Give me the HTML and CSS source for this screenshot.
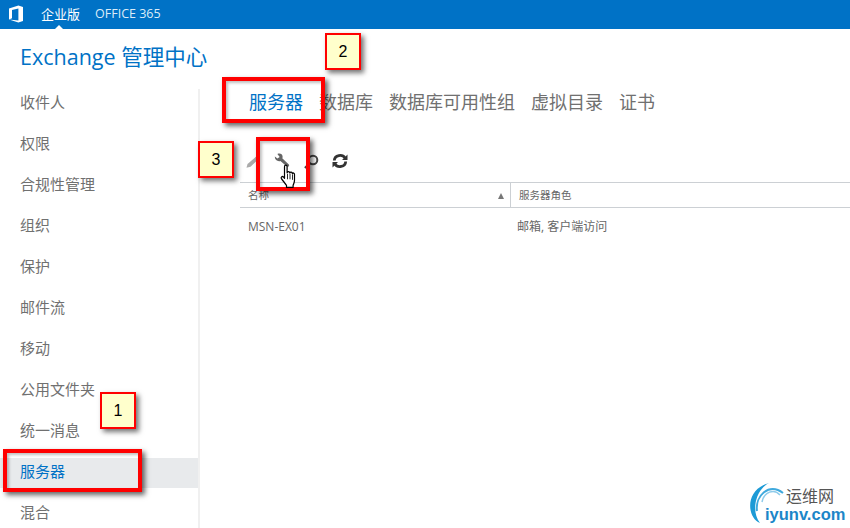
FILE: index.html
```html
<!DOCTYPE html>
<html lang="zh-CN">
<head>
<meta charset="utf-8">
<title>Exchange 管理中心</title>
<link rel="stylesheet" href="styles.css">
</head>
<body>
<header class="topbar">
  <svg class="office" viewBox="0 0 16 18" width="16" height="18"><path fill="#fff" d="M1 3.600 10.400.6 15 2v14l-4.600 1.600L1 14.400l9.400 1.200V3.600L4 5v8.200l-3 1.200z"/></svg>
  <span class="topitem active">企业版</span>
  <span class="topitem">OFFICE 365</span>
</header>
<h1 class="title">Exchange 管理中心</h1>
<div class="main">
  <nav class="side">
    <a class="navitem">收件人</a>
    <a class="navitem">权限</a>
    <a class="navitem">合规性管理</a>
    <a class="navitem">组织</a>
    <a class="navitem">保护</a>
    <a class="navitem">邮件流</a>
    <a class="navitem">移动</a>
    <a class="navitem">公用文件夹</a>
    <a class="navitem">统一消息</a>
    <a class="navitem selected">服务器</a>
    <a class="navitem">混合</a>
  </nav>
  <section class="content">
    <div class="tabs">
      <span class="tab current">服务器</span>
      <span class="tab">数据库</span>
      <span class="tab">数据库可用性组</span>
      <span class="tab">虚拟目录</span>
      <span class="tab">证书</span>
    </div>
    <div class="tools">
      <svg class="tool" viewBox="0 0 16 16" width="16" height="16"><path fill="#aaa" d="M1.500 14.800 2.500 11 11.500 3.200 14 5.500 5.500 13.800z"/></svg>
      <svg class="tool" viewBox="0 0 18 18" width="16" height="16"><path fill="#666" d="M1 3.800 3.800 6.300 6.400 4.400 3.800 1.200C6.500-.2 9.600 1.200 9.700 4.200 9.700 5 9.500 5.500 9.300 5.900l7.400 7c1.200 1.400-.8 3.500-2.200 2.300L7.200 8.900C4 10 .4 7.400 1 3.800z"/></svg>
      <svg class="tool" viewBox="0 0 16 16" width="16" height="16"><circle cx="10" cy="7" r="4.300" fill="none" stroke="#444" stroke-width="2"/><path stroke="#444" stroke-width="2.400" d="M7 10 2 15"/></svg>
      <svg class="tool" viewBox="0 0 16 16" width="16" height="16"><path fill="none" stroke="#333" stroke-width="2.800" d="M2.300 7.500C2.600 1.800 10.500.8 13 5M13.700 8.500C13.400 14.200 5.500 15.200 3 11"/><path fill="#333" d="M15.500 1.500V7H10zM.5 14.500V9H6z"/></svg>
    </div>
    <div class="table">
      <div class="thead">
        <div class="th name"><span>名称</span><i class="sort"></i></div>
        <div class="th role">服务器角色</div>
      </div>
      <div class="trow">
        <div class="td name">MSN-EX01</div>
        <div class="td role">邮箱, 客户端访问</div>
      </div>
    </div>
  </section>
</div>

<div class="mark box-tab"></div>
<div class="mark box-tool"></div>
<div class="mark box-side"></div>
<div class="label label-2">2</div>
<div class="label label-3">3</div>
<div class="label label-1">1</div>
<svg class="hand" viewBox="0 0 17 22" width="17" height="24" preserveAspectRatio="none"><path fill="#fff" stroke="#000" stroke-width="1.200" stroke-linejoin="round" d="M4.500 13V2.500c0-2 2.600-2 2.600 0V8c.4-1.400 2.500-1.300 2.700.2.500-1.100 2.300-.9 2.500.5.600-.8 2.200-.5 2.200 1V15c0 2-.8 3-1.400 4.500v2H6.500v-2C5 17.500 3.500 16 1.500 13.500c-.9-1.300.6-2.700 1.800-1.700z"/><path stroke="#000" stroke-width=".8" d="M7.500 9v5M10 9v5M12.500 9.500v5"/></svg>
<div class="logo">
  <svg class="logo-arcs" viewBox="0 0 40 44" width="40" height="44"><path fill="#1c9ad6" d="M15 43C2 38-1 10 24 3 10 10 6 32 15 43z"/><path fill="none" stroke="#3fa9dd" stroke-width="2" d="M12 31C10 16 24 2 38 13"/><path fill="none" stroke="#8ecbea" stroke-width="1.500" d="M17 22C19 12 29 8 35 15"/></svg>
  <span class="logo-cn">运维网</span>
  <span class="logo-en">iyunv.com</span>
</div>
</body>
</html>
```
FILE: styles.css
```css
* { box-sizing: border-box; }
html, body { margin: 0; height: 100%; }
body {
  width: 850px;
  height: 528px;
  overflow: hidden;
  position: relative;
  background: #fff;
  font-family: "Open Sans", "Noto Sans CJK SC", sans-serif;
}
.topbar {
  height: 29px;
  background: #0072c6;
  display: flex;
  align-items: center;
  color: #fff;
  font-size: 12.500px;
  padding: 0 0 2px 8px;
  position: relative;
}
.office { margin-right: 17px; }
.topitem { margin-right: 15px; color: #dcecf8; }
.topitem.active { color: #fff; font-size: 13px; }
.topbar::after {
  content: "";
  position: absolute;
  left: 55px;
  bottom: 0;
  border: 4px solid transparent;
  border-top: 0;
  border-bottom-color: #fff;
}
.title {
  margin: 0;
  height: 49px;
  padding: 13px 0 0 20px;
  font-size: 21.500px;
  line-height: 30px;
  font-weight: 400;
  color: #0072c6;
}
.main { display: flex; height: 450px; }
.side {
  width: 200px;
  background: linear-gradient(#f0f0f0, #f0f0f0) right 11px / 2px 100% no-repeat;
  padding: 4px 2px 0 0;
  display: flex;
  flex-direction: column;
}
.navitem {
  height: 41px;
  flex: none;
  display: flex;
  align-items: center;
  padding: 0 0 2px 20px;
  font-size: 15px;
  color: #707070;
}
.navitem.selected { color: #0072c6; background: linear-gradient(#fff 7px, #e8eaec 7px, #e8eaec 37px, #fff 37px); }
.content { flex: 1; padding: 10px 0 0 40px; min-width: 0; }
.tabs {
  display: flex;
  gap: 16px;
  padding: 0 0 0 9px;
  height: 26px;
  align-items: center;
  font-size: 18px;
  color: #707070;
}
.tab.current { color: #0072c6; }
.tools {
  display: flex;
  align-items: center;
  gap: 13px;
  height: 24px;
  margin: 35px 0 0 5px;
}
.table { margin-top: 9px; }
.thead {
  display: flex;
  height: 26px;
  border-top: 1px solid #ccd0d4;
  border-bottom: 1px solid #ccd0d4;
  font-size: 10.500px;
  color: #666;
  align-items: center;
}
.th.name, .td.name { width: 271px; padding-left: 8px; }
.th.name { display: flex; align-items: center; justify-content: space-between; padding-right: 6px; height: 100%; border-right: 1px solid #ccd0d4; padding-bottom: 2px; }
.sort { width: 0; height: 0; border: 3.500px solid transparent; border-top: 0; border-bottom: 6px solid #777; margin-top: 3px; }
.th.role { padding: 0 0 2px 8px; }
.trow { display: flex; height: 36px; align-items: center; font-size: 12px; color: #666; }
.td.role { padding-left: 6px; }
.mark {
  position: absolute;
  border: 4px solid #f00;
  box-shadow: 3px 3px 5px rgba(0, 0, 0, .6), inset 2px 2px 3px rgba(0, 0, 0, .25);
}
.box-tab { left: 222px; top: 77px; width: 103px; height: 46px; }
.box-tool { left: 256px; top: 137px; width: 54px; height: 54px; }
.box-side { left: 3px; top: 449px; width: 139px; height: 43px; }
.label {
  position: absolute;
  width: 36px;
  height: 37px;
  border: 2px solid #f00;
  background: #ffc;
  box-shadow: 3px 3px 5px rgba(0, 0, 0, .55);
  display: flex;
  align-items: center;
  justify-content: center;
  padding-top: 1px;
  font: 16px "Liberation Sans", sans-serif;
  color: #000;
}
.label-2 { left: 325px; top: 33px; }
.label-3 { left: 198px; top: 141px; }
.label-1 { left: 100px; top: 392px; }
.hand { position: absolute; left: 280px; top: 164px; }
.logo { position: absolute; left: 745px; top: 480px; width: 105px; height: 48px; }
.logo-arcs { position: absolute; left: 0; top: 0; }
.logo-cn { position: absolute; left: 41px; top: 6px; font-size: 16px; line-height: 20px; color: #555; }
.logo-en { position: absolute; left: 20px; top: 24px; font: 700 16.500px/20px "Liberation Sans", sans-serif; color: #1c86c8; }
```
